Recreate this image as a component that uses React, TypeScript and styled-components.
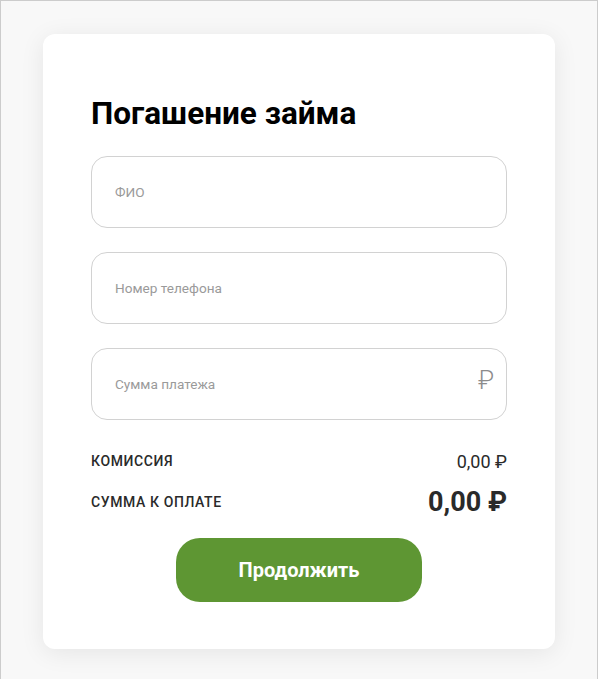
import React from 'react';
import styled, { createGlobalStyle } from 'styled-components';

const GlobalStyle = createGlobalStyle`
  html, body {
    margin: 0;
    padding: 0;
    background: #f8f8f8;
  }
  * {
    box-sizing: border-box;
  }
`;

const Page = styled.div`
  min-height: 100vh;
  border: 1px solid #cccccc;
  background: #f8f8f8;
  padding: 33px 0 30px;
  display: flex;
  justify-content: center;
  align-items: flex-start;
  font-family: Roboto, 'Noto Sans', sans-serif;
`;

const Card = styled.div`
  width: 512px;
  background: #ffffff;
  border-radius: 12px;
  box-shadow: 0 4px 24px rgba(0, 0, 0, 0.08);
  padding: 48px 48px 47px;
  display: flex;
  flex-direction: column;
`;

const Title = styled.h1`
  margin: 14px 0 23px;
  font-size: 31.5px;
  font-weight: 700;
  color: #000000;
  line-height: 1.17;
`;

const Fields = styled.div`
  display: flex;
  flex-direction: column;
  gap: 24px;
`;

const Field = styled.label`
  height: 72px;
  border: 1px solid #d2d2d2;
  border-radius: 16px;
  display: flex;
  align-items: center;
  padding: 0 12px 0 23px;
  gap: 8px;
`;

const Input = styled.input`
  flex: 1;
  border: none;
  outline: none;
  background: transparent;
  font-family: Roboto, sans-serif;
  font-size: 13.6px;
  color: #333333;
  padding: 0;

  &::placeholder {
    color: #9a9a9a;
  }
`;

const Currency = styled.span`
  font-size: 25px;
  font-weight: 300;
  color: #8c8c8c;
  margin-top: -6px;
`;

const Summary = styled.div`
  margin-top: 31px;
  display: flex;
  flex-direction: column;
  gap: 14px;
`;

const Row = styled.div`
  display: flex;
  justify-content: space-between;
  align-items: center;
`;

const Label = styled.span`
  font-size: 14px;
  font-weight: 500;
  letter-spacing: 0.6px;
  text-transform: uppercase;
  color: #2a2a2a;
`;

const Value = styled.span<{ $big?: boolean }>`
  font-size: ${(p) => (p.$big ? '27px' : '18px')};
  font-weight: ${(p) => (p.$big ? 700 : 400)};
  color: #2a2a2a;
`;

const Button = styled.button`
  align-self: center;
  margin-top: 20px;
  width: 246px;
  height: 64px;
  border: none;
  border-radius: 24px;
  background: #5e9633;
  color: #ffffff;
  font-family: Roboto, sans-serif;
  font-size: 20px;
  font-weight: 700;
  cursor: pointer;
`;

export default function App() {
  return (
    <>
      <GlobalStyle />
      <Page>
        <Card>
          <Title>Погашение займа</Title>
          <Fields>
            <Field>
              <Input placeholder="ФИО" />
            </Field>
            <Field>
              <Input placeholder="Номер телефона" />
            </Field>
            <Field>
              <Input placeholder="Сумма платежа" />
              <Currency>₽</Currency>
            </Field>
          </Fields>
          <Summary>
            <Row>
              <Label>Комиссия</Label>
              <Value>0,00 ₽</Value>
            </Row>
            <Row>
              <Label>Сумма к оплате</Label>
              <Value $big>0,00 ₽</Value>
            </Row>
          </Summary>
          <Button>Продолжить</Button>
        </Card>
      </Page>
    </>
  );
}
